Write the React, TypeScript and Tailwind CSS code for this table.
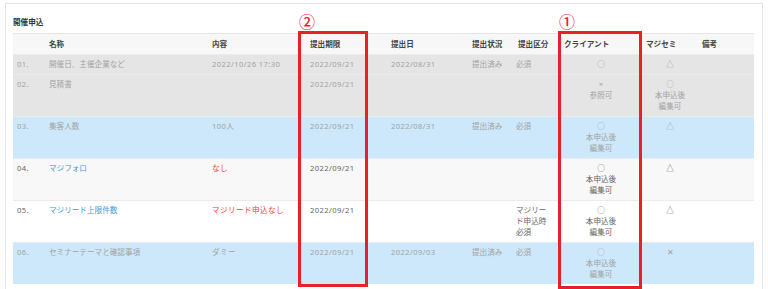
import React from 'react';

type Row = {
  no: string;
  name: string;
  content: string;
  deadline: string;
  submitted: string;
  status: string;
  kind: string;
  client: string[];
  maji: string[];
  bg: string;
  tone: 'muted' | 'active';
};

const rows: Row[] = [
  {
    no: '01.',
    name: '開催日、主催企業など',
    content: '2022/10/26 17:30',
    deadline: '2022/09/21',
    submitted: '2022/08/31',
    status: '提出済み',
    kind: '必須',
    client: ['○'],
    maji: ['△'],
    bg: 'bg-[#e5e5e5]',
    tone: 'muted',
  },
  {
    no: '02.',
    name: '見積書',
    content: '',
    deadline: '2022/09/21',
    submitted: '',
    status: '',
    kind: '',
    client: ['×', '参照可'],
    maji: ['○', '本申込後', '編集可'],
    bg: 'bg-[#e5e5e5]',
    tone: 'muted',
  },
  {
    no: '03.',
    name: '集客人数',
    content: '100人',
    deadline: '2022/09/21',
    submitted: '2022/08/31',
    status: '提出済み',
    kind: '必須',
    client: ['○', '本申込後', '編集可'],
    maji: ['△'],
    bg: 'bg-[#cce8fa]',
    tone: 'muted',
  },
  {
    no: '04.',
    name: 'マジフォロ',
    content: 'なし',
    deadline: '2022/09/21',
    submitted: '',
    status: '',
    kind: '',
    client: ['○', '本申込後', '編集可'],
    maji: ['△'],
    bg: 'bg-[#f8f8f8]',
    tone: 'active',
  },
  {
    no: '05.',
    name: 'マジリード上限件数',
    content: 'マジリード申込なし',
    deadline: '2022/09/21',
    submitted: '',
    status: '',
    kind: 'マジリード申込時必須',
    client: ['○', '本申込後', '編集可'],
    maji: ['△'],
    bg: 'bg-white',
    tone: 'active',
  },
  {
    no: '06.',
    name: 'セミナーテーマと確認事項',
    content: 'ダミー',
    deadline: '2022/09/21',
    submitted: '2022/09/03',
    status: '提出済み',
    kind: '必須',
    client: ['○', '本申込後', '編集可'],
    maji: ['✕'],
    bg: 'bg-[#cce8fa]',
    tone: 'muted',
  },
];

const headers = ['', '名称', '内容', '提出期限', '提出日', '提出状況', '提出区分', 'クライアント', 'マジセミ', '備考'];
const widths = ['w-[32px]', 'w-[163px]', 'w-[98px]', 'w-[81px]', 'w-[81px]', 'w-[46px]', 'w-[46px]', 'w-[82px]', 'w-[56px]', 'w-[56px]'];

function Lines({ items }: { items: string[] }) {
  return (
    <>
      {items.map((t, i) => (
        <div key={i}>{t}</div>
      ))}
    </>
  );
}

export default function App() {
  return (
    <div className="w-[768px] h-[289px] overflow-hidden bg-white pt-[3px] px-[5px] font-['Noto_Sans','Noto_Sans_CJK_JP',sans-serif] text-[7.6px] leading-[11px]">
      <div className="relative h-[290px] border border-b-0 border-[#e4e4e4] px-[7px] pt-[13px]">
        <div className="font-bold text-[#333] leading-[11px] mb-[5px]">開催申込</div>

        <table className="w-[741px] table-fixed border-collapse">
          <colgroup>
            {widths.map((w, i) => (
              <col key={i} className={w} />
            ))}
          </colgroup>
          <thead>
            <tr className="bg-[#f7f7f7] border-t border-[#e6e6e6]">
              {headers.map((h, i) => (
                <th key={i} className="text-left font-bold text-[#444] px-[4px] pt-[5px] pb-[4px] align-top">
                  {h}
                </th>
              ))}
            </tr>
          </thead>
          <tbody>
            {rows.map(r => {
              const muted = r.tone === 'muted';
              const base = muted ? 'text-[#a3a3a3]' : 'text-[#666]';
              const name = muted ? 'text-[#a3a3a3]' : 'text-[#3e9bd8]';
              const content = muted ? 'text-[#a3a3a3]' : 'text-[#ff3d3d]';
              const cell = 'px-[4px] pt-[4px] pb-[4px] align-top';
              const num = 'tracking-[0.4px]';
              return (
                <tr key={r.no} className={`${r.bg} border-t border-[#ebebeb] ${base}`}>
                  <td className={`${cell} ${num}`}>{r.no}</td>
                  <td className={`${cell} ${name}`}>{r.name}</td>
                  <td className={`${cell} ${content} ${num}`}>{r.content}</td>
                  <td className={`${cell} ${num}`}>{r.deadline}</td>
                  <td className={`${cell} ${num}`}>{r.submitted}</td>
                  <td className={cell}>{r.status}</td>
                  <td className={`${cell} pl-[2px] pr-[8px]`}>{r.kind}</td>
                  <td className={`${cell} text-center`}>
                    <Lines items={r.client} />
                  </td>
                  <td className={`${cell} text-center`}>
                    <Lines items={r.maji} />
                  </td>
                  <td className={cell}></td>
                </tr>
              );
            })}
          </tbody>
        </table>

        {/* highlight boxes */}
        <span className="absolute left-[293px] top-[9px] font-['Noto_Sans_CJK_JP',sans-serif] font-medium text-[16px] leading-[16px] text-[#f0202a]">②</span>
        <div className="absolute left-[292px] top-[27px] w-[70px] h-[256px] border-[3px] border-[#e8202a]" />
        <span className="absolute left-[553px] top-[9px] font-['Noto_Sans_CJK_JP',sans-serif] font-medium text-[16px] leading-[16px] text-[#f0202a]">①</span>
        <div className="absolute left-[552px] top-[27px] w-[84px] h-[258px] border-[3px] border-[#e8202a]" />
      </div>
    </div>
  );
}
